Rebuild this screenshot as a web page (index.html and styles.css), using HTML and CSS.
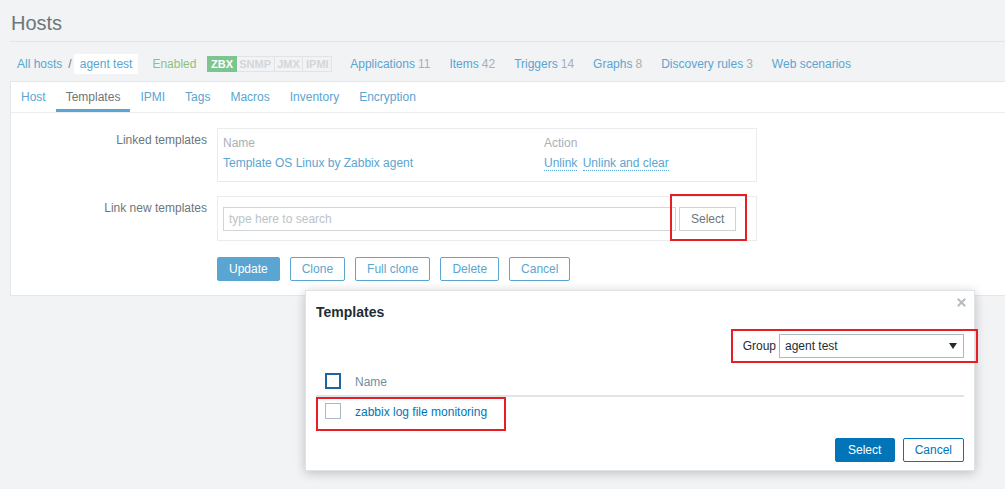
FILE: index.html
```html
<!DOCTYPE html>
<html lang="en">
<head>
<meta charset="utf-8">
<title>Hosts</title>
<link rel="stylesheet" href="styles.css">
</head>
<body>
<div class="page">
  <header class="head"><h1>Hosts</h1></header>

  <nav class="crumbs">
    <a class="link">All hosts</a>
    <span class="sep">/</span>
    <span class="crumb-cur">agent test</span>
    <span class="status">Enabled</span>
    <span class="badges">
      <span class="badge on">ZBX</span>
      <span class="badge">SNMP</span>
      <span class="badge">JMX</span>
      <span class="badge">IPMI</span>
    </span>
    <a class="link nav-item first">Applications<span class="cnt">11</span></a>
    <a class="link nav-item">Items<span class="cnt">42</span></a>
    <a class="link nav-item">Triggers<span class="cnt">14</span></a>
    <a class="link nav-item">Graphs<span class="cnt">8</span></a>
    <a class="link nav-item">Discovery rules<span class="cnt">3</span></a>
    <a class="link nav-item">Web scenarios</a>
  </nav>

  <section class="panel">
    <ul class="tabs">
      <li class="tab">Host</li>
      <li class="tab active">Templates</li>
      <li class="tab">IPMI</li>
      <li class="tab">Tags</li>
      <li class="tab">Macros</li>
      <li class="tab">Inventory</li>
      <li class="tab">Encryption</li>
    </ul>

    <div class="form">
      <div class="row">
        <div class="lbl">Linked templates</div>
        <div class="box linked">
          <div class="lt-head">Name</div>
          <div class="lt-head">Action</div>
          <div class="lt-cell"><a class="link">Template OS Linux by Zabbix agent</a></div>
          <div class="lt-cell"><a class="link dotted">Unlink</a> <a class="link dotted">Unlink and clear</a></div>
        </div>
      </div>

      <div class="row gap-row">
        <div class="lbl">Link new templates</div>
        <div class="box ms">
          <div class="ms-input">type here to search</div>
          <button class="btn-grey">Select</button>
        </div>
      </div>

      <div class="row btn-row">
        <div></div>
        <div class="btns">
          <button class="btn primary">Update</button>
          <button class="btn">Clone</button>
          <button class="btn">Full clone</button>
          <button class="btn">Delete</button>
          <button class="btn">Cancel</button>
        </div>
      </div>
    </div>
  </section>

  <div class="modal">
    <h4 class="modal-title">Templates</h4>
    <span class="close">
      <svg width="9" height="9" viewBox="0 0 9 9"><path d="M1.5 1.5 L7.5 7.5 M7.5 1.5 L1.5 7.5" stroke="#b4bcc0" stroke-width="2" stroke-linecap="square"/></svg>
    </span>
    <div class="group-row">
      <span class="group-lbl">Group</span>
      <div class="select">
        <span>agent test</span>
        <svg class="arrow" width="8" height="6" viewBox="0 0 8 6"><path d="M0 0 H8 L4 6 Z" fill="#1f2c33"/></svg>
      </div>
    </div>
    <div class="dlg-table">
      <div class="dlg-head">
        <span class="cb cb-head"></span>
        <span class="dlg-name">Name</span>
      </div>
      <div class="dlg-row">
        <span class="cb"></span>
        <a class="dlg-link">zabbix log file monitoring</a>
      </div>
    </div>
    <div class="dlg-foot">
      <button class="dbtn dprimary">Select</button>
      <button class="dbtn">Cancel</button>
    </div>
  </div>

  <div class="mark mark-select"></div>
  <div class="mark mark-group"></div>
  <div class="mark mark-row"></div>
</div>
</body>
</html>
```

FILE: styles.css
```css
* { box-sizing: border-box; }
html, body { margin: 0; padding: 0; }
body {
  font: 12px/1.2 "Liberation Sans", Arial, sans-serif;
  background: #f2f3f5;
  color: #6d767a;
}
.page {
  position: relative;
  width: 1005px;
  height: 489px;
  overflow: hidden;
}

/* header */
.head {
  margin-left: 10px;
  height: 42px;
  border-bottom: 1px solid #e3e6e8;
  padding-left: 1px;
}
.head h1 {
  margin: 0;
  padding-top: 11px;
  font-size: 20px;
  line-height: 24px;
  font-weight: normal;
  color: #6d767a;
}

/* breadcrumbs */
.crumbs {
  display: flex;
  align-items: center;
  height: 39px;
  padding: 5px 0 0 17px;
  white-space: nowrap;
}
.link { color: #5aa5d1; text-decoration: none; }
.sep { margin: 0 2px 0 6px; color: #6d767a; }
.crumb-cur {
  background: #fff;
  color: #5aa5d1;
  padding: 0 6px;
  height: 20px;
  line-height: 20px;
}
.status { margin-left: 14px; color: #8fbf80; }
.badges { display: flex; margin-left: 11px; }
.badge {
  height: 16px;
  line-height: 14px;
  padding: 0 2.6px;
  font-size: 11px;
  font-weight: bold;
  border: 1px solid #e1e4e6;
  color: #d3d7d9;
}
.badge + .badge { border-left: 0; }
.badge.on { background: #7dc58f; border-color: #7dc58f; color: #fff; }
.nav-item { margin-left: 19px; }
.nav-item.first { margin-left: 18px; }
.cnt { font-size: 12px; color: #a6b0b5; margin-left: 3px; }

/* panel */
.panel {
  margin-left: 10px;
  background: #fff;
  border: 1px solid #e4e7e9;
  border-right: 0;
  padding-bottom: 14px;
}
.tabs {
  display: flex;
  list-style: none;
  margin: 0;
  padding: 0;
  border-bottom: 1px solid #ebedee;
}
.tab {
  padding: 0 10px;
  height: 30px;
  line-height: 30px;
  color: #5aa5d1;
}
.tab.active {
  color: #6d767a;
  box-shadow: inset 0 -3px 0 #5aa5d1;
}

/* form */
.form { padding-top: 15px; }
.row {
  display: grid;
  grid-template-columns: 196px 540px;
  column-gap: 10px;
}
.gap-row { margin-top: 14px; }
.btn-row { margin-top: 16px; }
.lbl {
  text-align: right;
  line-height: 24px;
  color: #6d767a;
}
.box { border: 1px solid #e9ebec; }
.linked {
  display: grid;
  grid-template-columns: 321px auto;
  padding: 5px 5px 7px;
}
.lt-head { line-height: 18px; color: #a9b0b4; }
.lt-cell { line-height: 22px; }
.dotted { border-bottom: 1px dotted #5aa5d1; }
.dotted + .dotted { margin-left: 2px; }

.ms {
  display: flex;
  gap: 3px;
  padding: 10px 5px 9px;
}
.ms-input {
  width: 453px;
  height: 24px;
  line-height: 22px;
  border: 1px solid #cfd5d8;
  padding: 0 5px;
  color: #bcc3c7;
}
.btn-grey {
  height: 24px;
  padding: 0 11px;
  font: inherit;
  background: #fff;
  border: 1px solid #ccd3d7;
  color: #6d767a;
}

.btns { display: flex; gap: 10px; }
.btn {
  height: 24px;
  padding: 0 11px;
  font: inherit;
  background: #fff;
  border: 1px solid #5aa5d1;
  color: #5aa5d1;
  border-radius: 2px;
}
.btn.primary { background: #5aa5d1; color: #fff; }

/* modal */
.modal {
  position: absolute;
  left: 305px;
  top: 290px;
  width: 670px;
  height: 181px;
  background: #fff;
  border: 1px solid #dfe4e7;
  box-shadow: 0 2px 10px rgba(0, 0, 0, 0.22);
  padding: 0 10px;
  color: #1f2c33;
}
.modal-title {
  margin: 11px 0 0;
  font-size: 14px;
  line-height: 20px;
  font-weight: bold;
  color: #1f2c33;
}
.close {
  position: absolute;
  top: 7px;
  right: 8px;
  width: 9px;
  height: 9px;
  display: flex;
}
.group-row {
  display: flex;
  justify-content: flex-end;
  align-items: center;
  margin-top: 12px;
}
.group-lbl { margin-right: 3px; }
.select {
  width: 185px;
  height: 24px;
  border: 1px solid #acbbc2;
  padding: 0 6px 0 5px;
  display: flex;
  align-items: center;
  justify-content: space-between;
}
.dlg-table { margin-top: 9px; }
.dlg-head, .dlg-row {
  display: flex;
  align-items: center;
  padding-left: 9px;
  gap: 14px;
}
.dlg-head { height: 30px; border-bottom: 2px solid #dfe4e7; }
.dlg-row { height: 28px; }
.dlg-name, .dlg-link { padding-top: 2px; }
.cb {
  width: 16px;
  height: 16px;
  border: 1px solid #acbbc2;
  background: #fff;
}
.cb-head { border: 2px solid #1f65a0; }
.dlg-name { color: #768d99; }
.dlg-link { color: #0275b8; text-decoration: none; }
.dlg-foot {
  display: flex;
  justify-content: flex-end;
  gap: 8px;
  margin-top: 13px;
}
.dbtn {
  height: 24px;
  min-width: 60px;
  padding: 0 11px;
  font: inherit;
  background: #fff;
  border: 1px solid #0275b8;
  color: #0275b8;
  border-radius: 2px;
}
.dbtn.dprimary { background: #0275b8; color: #fff; }

/* red annotation rectangles */
.mark {
  position: absolute;
  border: 2px solid #e61e25;
}
.mark-select { left: 670px; top: 194px; width: 77px; height: 47px; }
.mark-group { left: 731px; top: 329px; width: 247px; height: 34px; }
.mark-row { left: 316px; top: 397px; width: 190px; height: 34px; }
```
